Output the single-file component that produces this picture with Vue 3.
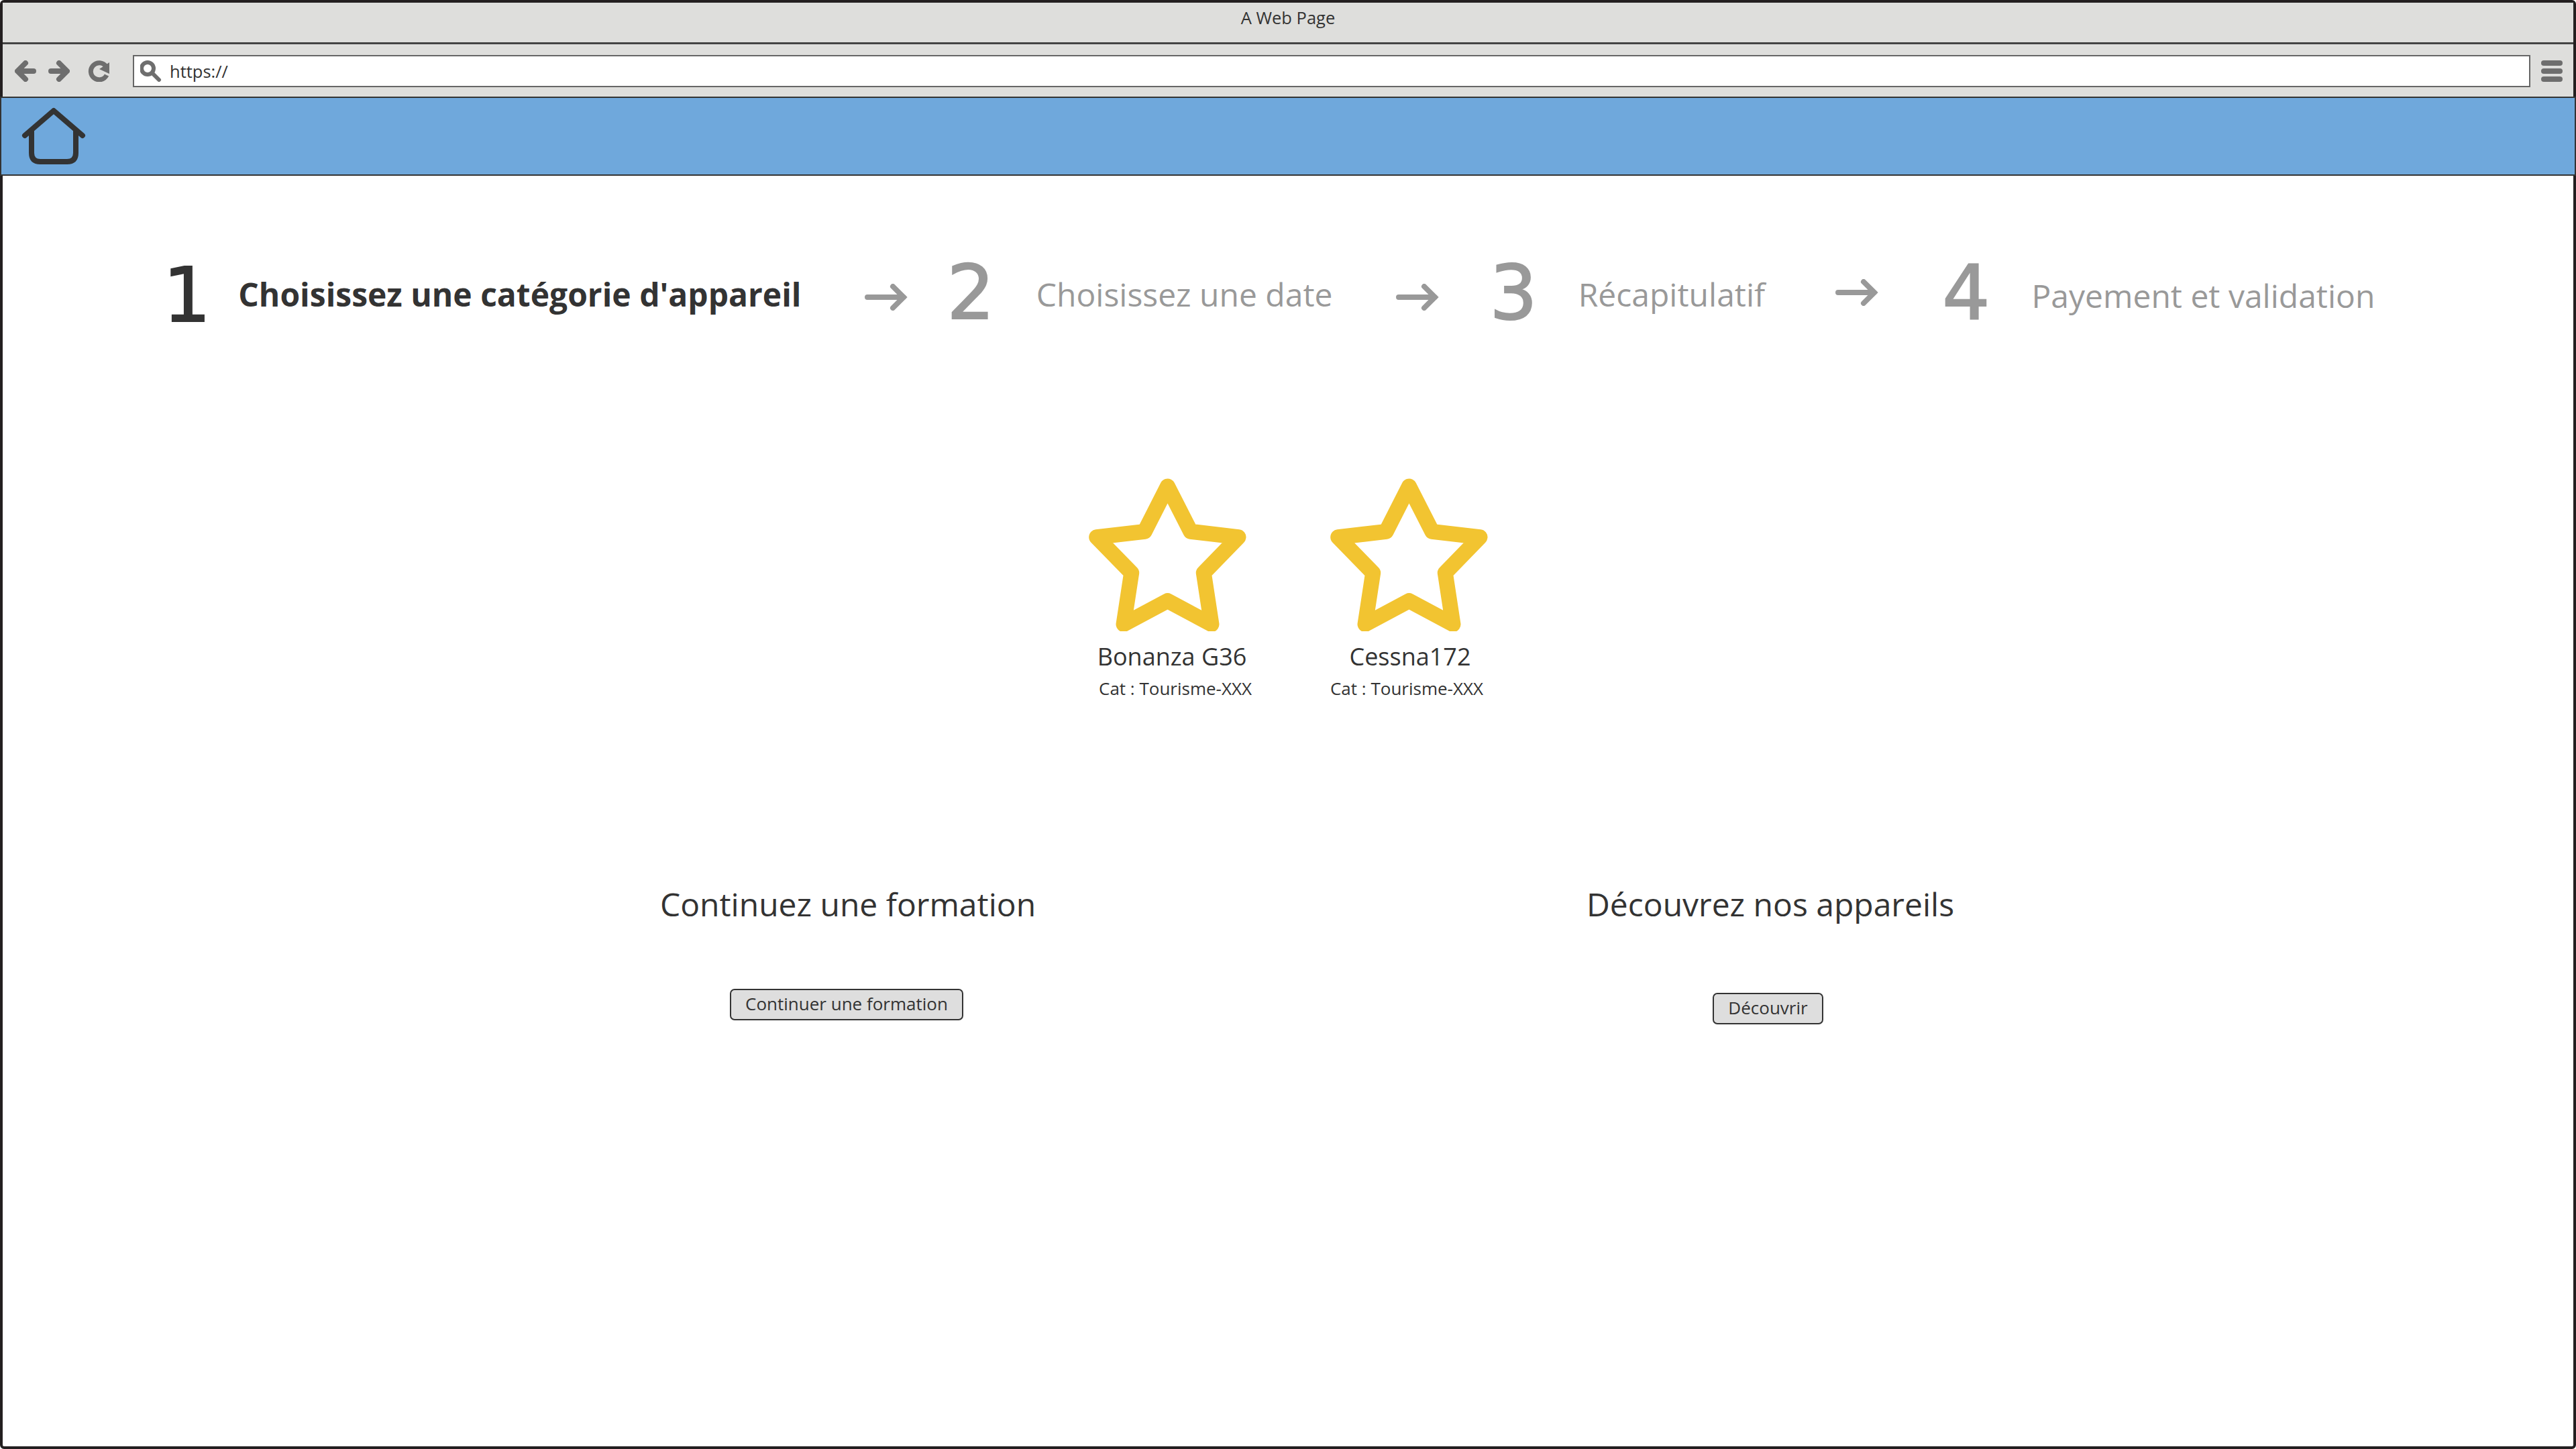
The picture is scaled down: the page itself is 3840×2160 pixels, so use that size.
<script setup>
const star = 'M117.5 12L151.8 79.3L223 87.7L171.3 141L183 217.7L117.5 182.7L52 217.7L63.7 141L11.7 87.7L83.3 79.3Z'
const cards = [
  { name: 'Bonanza G36', cat: 'Cat : Tourisme-XXX', cls: 'card-a' },
  { name: 'Cessna172', cat: 'Cat : Tourisme-XXX', cls: 'card-b' }
]
</script>

<template>
  <div class="window">
    <div class="titlebar">A Web Page</div>
    <div class="toolbar">
      <svg class="tool back" viewBox="0 0 32 32"><path d="M28 16H6M16 4L4 16L16 28" /></svg>
      <svg class="tool forward" viewBox="0 0 32 32"><path d="M4 16H26M16 4L28 16L16 28" /></svg>
      <svg class="tool reload" viewBox="0 0 32 32">
        <path d="M27 9A12.5 12.5 0 1 0 28 22" />
        <polygon class="solid" points="32,3 32,20 17,13" />
      </svg>
      <div class="urlbox">
        <svg class="search" viewBox="0 0 32 32">
          <circle cx="11" cy="12" r="9" />
          <path d="M18 19L28 29" />
        </svg>
        <span class="url">https://</span>
      </div>
      <div class="menu"><i></i><i></i><i></i></div>
    </div>

    <div class="nav">
      <svg class="home" viewBox="0 0 96 86">
        <path d="M5 42L48 5L91 42M15 34V68Q15 81 28 81H68Q81 81 81 68V34" />
      </svg>
    </div>

    <div class="steps">
      <span class="num n1 active">1</span>
      <span class="label l1 active">Choisissez une catégorie d'appareil</span>
      <svg class="arrow a1" viewBox="0 0 64 40"><path d="M4 20H58M42 4L58 20L42 36" /></svg>
      <span class="num n2">2</span>
      <span class="label l2">Choisissez une date</span>
      <svg class="arrow a2" viewBox="0 0 64 40"><path d="M4 20H58M42 4L58 20L42 36" /></svg>
      <span class="num n3">3</span>
      <span class="label l3">Récapitulatif</span>
      <svg class="arrow a3" viewBox="0 0 64 40"><path d="M4 20H58M42 4L58 20L42 36" /></svg>
      <span class="num n4">4</span>
      <span class="label l4">Payement et validation</span>
    </div>

    <div class="cards">
      <div v-for="card in cards" :key="card.name" class="card" :class="card.cls">
        <svg class="star" viewBox="0 0 235 228"><path :d="star" /></svg>
        <div class="name">{{ card.name }}</div>
        <div class="cat">{{ card.cat }}</div>
      </div>
    </div>

    <div class="actions">
      <div class="action first">
        <h2>Continuez une formation</h2>
        <button>Continuer une formation</button>
      </div>
      <div class="action second">
        <h2>Découvrez nos appareils</h2>
        <button>Découvrir</button>
      </div>
    </div>
  </div>
</template>

<style>
html, body { margin: 0; background: #fff; }
</style>

<style scoped>
.window {
  width: 3840px;
  height: 2160px;
  box-sizing: border-box;
  border: 4px solid #231f20;
  border-radius: 6px;
  background: #fff;
  color: #333;
  font-family: "Open Sans", "Noto Sans", sans-serif;
}

.titlebar {
  height: 59px;
  background: #dededc;
  border-bottom: 3px solid #444;
  font-size: 25.5px;
  line-height: 44px;
  text-align: center;
}

.toolbar {
  height: 78px;
  background: #dededc;
  display: flex;
  align-items: center;
  padding: 2px 16px 0 18px;
  box-sizing: border-box;
}

.tool {
  width: 32px;
  height: 32px;
  flex: none;
  fill: none;
  stroke: #6e6e6e;
  stroke-width: 8;
  stroke-linecap: round;
  stroke-linejoin: round;
}
.forward { margin-left: 18px; }
.reload { margin-left: 27px; stroke-width: 7; stroke-linecap: butt; }
.solid { fill: #6e6e6e; stroke: none; }

.urlbox {
  margin-left: 35px;
  flex: 1;
  height: 48px;
  box-sizing: border-box;
  border: 2px solid #666;
  background: #fff;
  display: flex;
  align-items: center;
  padding-left: 9px;
}
.search {
  width: 32px;
  height: 32px;
  fill: none;
  stroke: #6e6e6e;
  stroke-width: 6;
  stroke-linecap: round;
}
.url {
  margin-left: 12px;
  font-size: 25.5px;
}

.menu {
  margin-left: 16px;
  width: 32px;
  display: flex;
  flex-direction: column;
  gap: 4px;
}
.menu i {
  display: block;
  height: 8px;
  border-radius: 4px;
  background: #6e6e6e;
}

.nav {
  margin: 0 -4px;
  height: 114px;
  background: #6fa8dc;
  border: 2px solid #333;
  display: flex;
  align-items: center;
  padding-left: 30px;
}
.home {
  width: 96px;
  height: 86px;
  fill: none;
  stroke: #333;
  stroke-width: 8;
  stroke-linecap: round;
  stroke-linejoin: round;
}

.steps {
  display: flex;
  align-items: flex-start;
  height: 300px;
  padding-left: 239px;
}
.num {
  font-family: "DejaVu Sans", sans-serif;
  font-size: 112px;
  line-height: 115px;
  color: #999;
  -webkit-text-stroke: 2px #999;
  margin-top: 117px;
}
.num.active {
  color: #333;
  -webkit-text-stroke: 2px #333;
  margin-top: 121px;
}
.label {
  font-size: 48px;
  line-height: 66px;
  margin-top: 144px;
  color: #999;
  white-space: nowrap;
}
.label.active {
  color: #333;
  font-weight: 700;
}
.arrow {
  width: 64px;
  height: 40px;
  flex: none;
  margin-top: 161px;
  fill: none;
  stroke: #999;
  stroke-width: 8;
  stroke-linecap: round;
  stroke-linejoin: miter;
}
.l1 { margin-left: 41px; }
.a1 { margin-left: 95px; }
.n2 { margin-left: 58px; }
.l2 { margin-left: 62px; }
.a2 { margin-left: 95px; }
.n3 { margin-left: 75px; }
.l3 { margin-left: 61px; }
.a3 { margin-left: 105px; margin-top: 154px; }
.n4 { margin-left: 95px; }
.l4 { margin-left: 62px; margin-top: 146px; }

.cards {
  display: flex;
  padding-left: 1616px;
  padding-top: 151px;
  gap: 120px;
  height: 500px;
  box-sizing: border-box;
}
.card {
  width: 240px;
  display: flex;
  flex-direction: column;
  align-items: center;
}
.star {
  width: 235px;
  height: 228px;
  flex: none;
  fill: none;
  stroke: #f2c431;
  stroke-width: 23;
  stroke-linejoin: round;
}
.name {
  font-size: 36px;
  line-height: 50px;
  margin-top: 13px;
  white-space: nowrap;
}
.cat {
  font-size: 26px;
  line-height: 36px;
  margin-top: 4px;
  white-space: nowrap;
}
.card-a .name { margin-left: 14px; }
.card-a .cat { margin-left: 24px; }
.card-b .name { margin-left: 4px; }
.card-b .cat { margin-right: 6px; }

.actions {
  display: flex;
  gap: 375px;
  padding-left: 760px;
  padding-top: 253px;
}
.action {
  width: 1000px;
  display: flex;
  flex-direction: column;
  align-items: center;
}
h2 {
  margin: 0;
  font-size: 48px;
  font-weight: 400;
  line-height: 66px;
}
button {
  font-family: inherit;
  font-size: 26px;
  color: #333;
  background: #dedede;
  border: 2px solid #333;
  border-radius: 7px;
  height: 47px;
  padding: 0 21px 3px;
  margin-top: 93px;
}
.second button { margin-top: 99px; margin-right: 7px; }
.first button { margin-right: 4px; }
</style>
